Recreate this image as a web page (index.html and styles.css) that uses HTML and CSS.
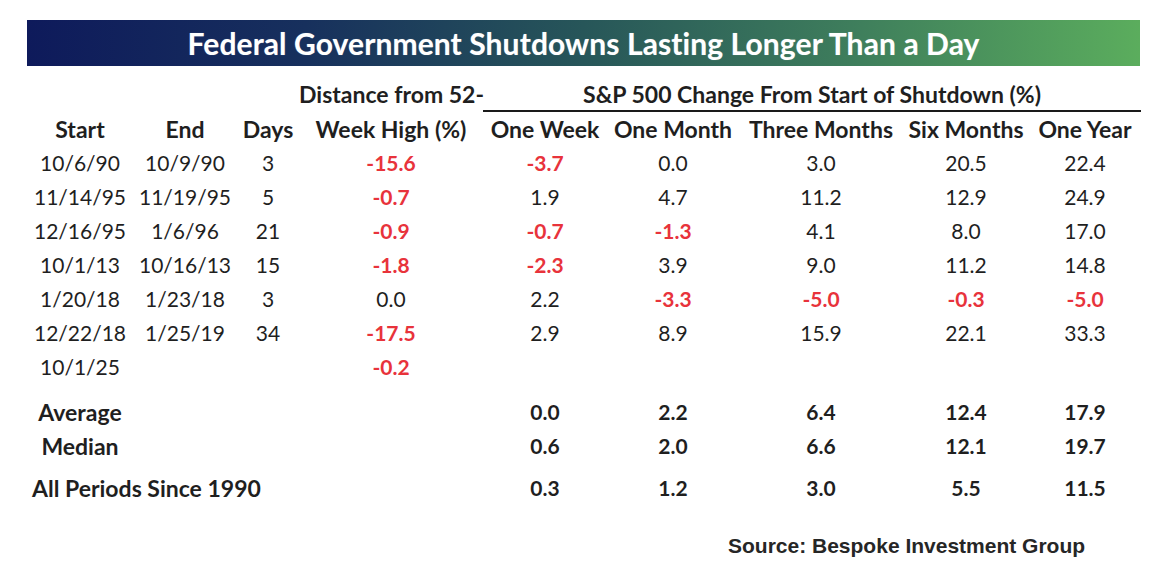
FILE: index.html
```html
<!DOCTYPE html>
<html lang="en">
<head>
<meta charset="utf-8">
<title>Federal Government Shutdowns Lasting Longer Than a Day</title>
<link rel="stylesheet" href="styles.css">
</head>
<body>
<div class="page">
  <div class="title-bar">Federal Government Shutdowns Lasting Longer Than a Day</div>
  <table class="grid">
    <colgroup>
      <col class="c-start"><col class="c-end"><col class="c-days"><col class="c-dist">
      <col class="c-ow"><col class="c-om"><col class="c-tm"><col class="c-sm"><col class="c-oy">
    </colgroup>
    <thead>
      <tr class="row">
        <th></th><th></th><th></th>
        <th class="wide">Distance from 52-</th>
        <th colspan="5" class="group">S&amp;P 500 Change From Start of Shutdown (%)</th>
      </tr>
      <tr class="row">
        <th>Start</th><th>End</th><th>Days</th><th>Week High (%)</th>
        <th>One Week</th><th>One Month</th><th>Three Months</th><th>Six Months</th><th>One Year</th>
      </tr>
    </thead>
    <tbody>
      <tr class="row"><td>10/6/90</td><td>10/9/90</td><td>3</td><td class="neg">-15.6</td><td class="neg">-3.7</td><td>0.0</td><td>3.0</td><td>20.5</td><td>22.4</td></tr>
      <tr class="row"><td>11/14/95</td><td>11/19/95</td><td>5</td><td class="neg">-0.7</td><td>1.9</td><td>4.7</td><td>11.2</td><td>12.9</td><td>24.9</td></tr>
      <tr class="row"><td>12/16/95</td><td>1/6/96</td><td>21</td><td class="neg">-0.9</td><td class="neg">-0.7</td><td class="neg">-1.3</td><td>4.1</td><td>8.0</td><td>17.0</td></tr>
      <tr class="row"><td>10/1/13</td><td>10/16/13</td><td>15</td><td class="neg">-1.8</td><td class="neg">-2.3</td><td>3.9</td><td>9.0</td><td>11.2</td><td>14.8</td></tr>
      <tr class="row"><td>1/20/18</td><td>1/23/18</td><td>3</td><td>0.0</td><td>2.2</td><td class="neg">-3.3</td><td class="neg">-5.0</td><td class="neg">-0.3</td><td class="neg">-5.0</td></tr>
      <tr class="row"><td>12/22/18</td><td>1/25/19</td><td>34</td><td class="neg">-17.5</td><td>2.9</td><td>8.9</td><td>15.9</td><td>22.1</td><td>33.3</td></tr>
      <tr class="row"><td>10/1/25</td><td></td><td></td><td class="neg">-0.2</td><td></td><td></td><td></td><td></td><td></td></tr>
      <tr class="spacer-a"><td colspan="9"></td></tr>
      <tr class="row summary"><td class="label">Average</td><td></td><td></td><td></td><td>0.0</td><td>2.2</td><td>6.4</td><td>12.4</td><td>17.9</td></tr>
      <tr class="row summary"><td class="label">Median</td><td></td><td></td><td></td><td>0.6</td><td>2.0</td><td>6.6</td><td>12.1</td><td>19.7</td></tr>
      <tr class="spacer-b"><td colspan="9"></td></tr>
      <tr class="row summary"><td class="label left">All Periods Since 1990</td><td></td><td></td><td></td><td>0.3</td><td>1.2</td><td>3.0</td><td>5.5</td><td>11.5</td></tr>
    </tbody>
  </table>
  <div class="source">Source: Bespoke Investment Group</div>
</div>
</body>
</html>
```

FILE: styles.css
```css
html, body {
  margin: 0;
  padding: 0;
  background: #ffffff;
}

.page {
  width: 1113px;
  margin-left: 27px;
  padding-top: 20px;
  font-family: Lato, "Open Sans", sans-serif;
  color: #1f1f1f;
}

.title-bar {
  height: 46px;
  line-height: 46px;
  text-align: center;
  color: #ffffff;
  font-weight: 700;
  font-size: 30px;
  letter-spacing: 0.1px;
  background: linear-gradient(90deg, #0e1a5b 0%, #17305d 25%, #275659 50%, #3f7f5c 75%, #5bad5d 100%);
  text-shadow: 0 0 1px rgba(255, 255, 255, 0.35);
}

.grid {
  margin-top: 11px;
  border-collapse: collapse;
  table-layout: fixed;
  width: 1114px;
}

.c-start { width: 106px; }
.c-end { width: 104px; }
.c-days { width: 62px; }
.c-dist { width: 184px; }
.c-ow { width: 124px; }
.c-om { width: 132px; }
.c-tm { width: 164px; }
.c-sm { width: 126px; }
.c-oy { width: 112px; }

.grid th,
.grid td {
  padding: 0;
  text-align: center;
  white-space: nowrap;
  font-size: 21px;
  line-height: 34px;
}

.grid th {
  font-weight: 700;
  font-size: 23px;
}

.row {
  height: 34px;
}

.grid th.group {
  border-bottom: 2px solid #1a1a1a;
  line-height: 32px;
}

.neg {
  color: #e8333b;
  font-weight: 700;
}

.summary td {
  font-weight: 700;
}

.summary td.label {
  font-size: 23px;
  overflow: visible;
}

.summary td.left {
  text-align: left;
  padding-left: 5px;
}

.spacer-a {
  height: 11px;
}

.spacer-b {
  height: 8px;
}

.spacer-a td,
.spacer-b td {
  line-height: 0;
}

.source {
  margin-top: 29px;
  margin-left: 701px;
  font-family: "Liberation Sans", Arial, sans-serif;
  font-weight: 700;
  font-size: 21px;
  color: #262626;
}
```
